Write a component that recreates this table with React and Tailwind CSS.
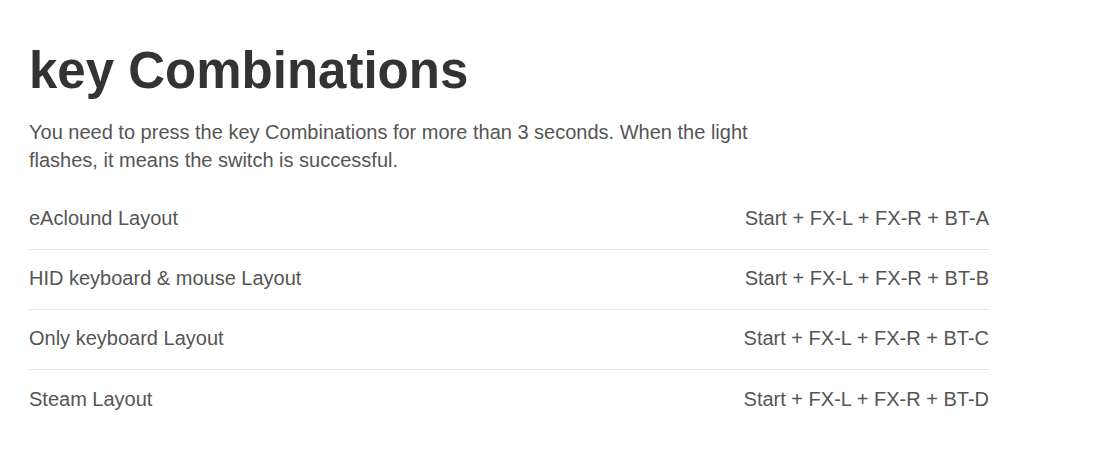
const rows = [
  ["eAclound Layout", "Start + FX-L + FX-R + BT-A"],
  ["HID keyboard & mouse Layout", "Start + FX-L + FX-R + BT-B"],
  ["Only keyboard Layout", "Start + FX-L + FX-R + BT-C"],
  ["Steam Layout", "Start + FX-L + FX-R + BT-D"],
];

export default function App() {
  return (
    <div className="min-h-screen bg-white px-[29px] pt-[40px] font-['Liberation_Sans',Arial,sans-serif]">
      <h1 className="text-[51px] font-bold leading-[62px] text-[#333]">key Combinations</h1>
      <p className="mt-[16px] max-w-[740px] text-[20px] leading-[28px] text-[#555]">
        You need to press the key Combinations for more than 3 seconds. When the light flashes, it means the switch is
        successful.
      </p>
      <div className="mt-[16px] w-[960px]">
        {rows.map(([name, keys], i) => (
          <div
            key={name}
            className={`flex h-[60px] items-center justify-between pb-[3px] text-[20px] text-[#555] ${
              i < rows.length - 1 ? "border-b border-[#e5e5e5]" : ""
            }`}
          >
            <span>{name}</span>
            <span>{keys}</span>
          </div>
        ))}
      </div>
    </div>
  );
}
